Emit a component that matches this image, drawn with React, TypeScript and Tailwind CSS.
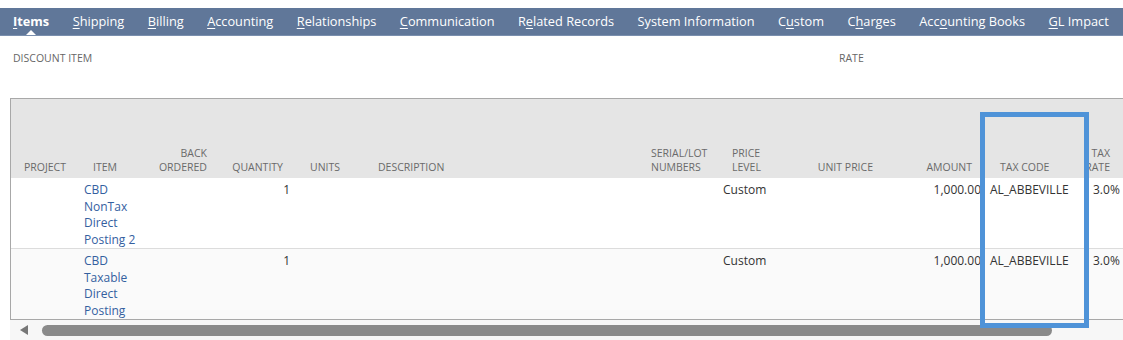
import React from "react";

type Tab = { pre: string; u: string; post: string; active?: boolean };

const tabs: Tab[] = [
  { pre: "", u: "I", post: "tems", active: true },
  { pre: "", u: "S", post: "hipping" },
  { pre: "", u: "B", post: "illing" },
  { pre: "", u: "A", post: "ccounting" },
  { pre: "", u: "R", post: "elationships" },
  { pre: "", u: "C", post: "ommunication" },
  { pre: "R", u: "e", post: "lated Records" },
  { pre: "System Information", u: "", post: "" },
  { pre: "C", u: "u", post: "stom" },
  { pre: "C", u: "h", post: "arges" },
  { pre: "Acc", u: "o", post: "unting Books" },
  { pre: "", u: "G", post: "L Impact" },
];

const colWidths = [68, 71, 62, 80, 78, 275, 75, 70, 95, 100, 100, 60];

type Head = { lines: string[]; cls: string };
const heads: Head[] = [
  { lines: ["PROJECT"], cls: "text-center" },
  { lines: ["ITEM"], cls: "text-left pl-[14px]" },
  { lines: ["BACK", "ORDERED"], cls: "text-right pr-[5px]" },
  { lines: ["QUANTITY"], cls: "text-right pr-[9px]" },
  { lines: ["UNITS"], cls: "text-left pl-[18px]" },
  { lines: ["DESCRIPTION"], cls: "text-left pl-[8px]" },
  { lines: ["SERIAL/LOT", "NUMBERS"], cls: "text-left pl-[6px]" },
  { lines: ["PRICE", "LEVEL"], cls: "text-left pl-[12px]" },
  { lines: ["UNIT PRICE"], cls: "text-right pr-[12px]" },
  { lines: ["AMOUNT"], cls: "text-right pr-[13px]" },
  { lines: ["TAX CODE"], cls: "text-left pl-[15px]" },
  { lines: ["TAX", "RATE"], cls: "text-right pr-[35px]" },
];

const rows = [
  { item: ["CBD", "NonTax", "Direct", "Posting 2"], bg: "bg-white", border: "border-b border-[#dcdcdc]" },
  { item: ["CBD", "Taxable", "Direct", "Posting"], bg: "bg-[#fafafa]", border: "border-b border-[#a8a8a8]" },
];

export default function App() {
  return (
    <div className="relative h-[340px] w-[1123px] overflow-hidden bg-white font-['Open_Sans',sans-serif] text-[#333]">
      {/* Tab bar */}
      <div className="pt-2">
        <div className="flex h-[28px] items-center gap-[23.5px] bg-[#607799] pl-[13px] text-[12.75px] text-white whitespace-nowrap border-b border-[#7a8fae]">
          {tabs.map((t, i) => (
            <div key={i} className={`relative flex h-full items-center pt-[1px] ${t.active ? "font-bold" : ""}`}>
              <span>
                {t.pre}
                {t.u && <span className="underline decoration-1 underline-offset-2">{t.u}</span>}
                {t.post}
              </span>
              {t.active && (
                <span className="absolute bottom-0 left-1/2 h-0 w-0 -translate-x-1/2 border-x-[5px] border-b-[5px] border-x-transparent border-b-white" />
              )}
            </div>
          ))}
        </div>
      </div>

      {/* Labels */}
      <div className="relative h-[62px] pt-[14px] text-[10.5px] leading-4 text-[#666]">
        <span className="absolute left-[13px]">DISCOUNT ITEM</span>
        <span className="absolute left-[839px]">RATE</span>
      </div>

      {/* Table */}
      <div className="ml-[10px] w-[1140px] overflow-hidden border-l border-t border-[#a8a8a8]">
        <table className="table-fixed border-collapse">
          <colgroup>
            {colWidths.map((w, i) => (
              <col key={i} style={{ width: w }} />
            ))}
          </colgroup>
          <thead>
            <tr className="h-[79px] bg-[#e5e5e5]">
              {heads.map((h, i) => (
                <th
                  key={i}
                  className={`align-bottom pb-[4px] text-[10.5px] font-normal leading-[14px] text-[#6a6a6a] whitespace-nowrap ${h.cls}`}
                >
                  {h.lines.map((l, j) => (
                    <div key={j}>{l}</div>
                  ))}
                </th>
              ))}
            </tr>
          </thead>
          <tbody>
            {rows.map((r, ri) => (
              <tr key={ri} className={`${r.bg} ${r.border} h-[70px] text-[12px] leading-[16.5px]`}>
                <td className="align-top pt-[4px]" />
                <td className="align-top pt-[4px] pl-[5px] text-[#34609f]">
                  {r.item.map((l, j) => (
                    <div key={j} className="whitespace-nowrap">{l}</div>
                  ))}
                </td>
                <td className="align-top pt-[4px]" />
                <td className="align-top pt-[4px] pr-[2px] text-right">1</td>
                <td className="align-top pt-[4px]" />
                <td className="align-top pt-[4px]" />
                <td className="align-top pt-[4px]" />
                <td className="align-top pt-[4px] pl-[3px]">Custom</td>
                <td className="align-top pt-[4px]" />
                <td className="align-top pt-[4px] pr-[4px] text-right">1,000.00</td>
                <td className="align-top pt-[4px] pl-[5px]">AL_ABBEVILLE</td>
                <td className="align-top pt-[4px] pl-[8px]">3.0%</td>
              </tr>
            ))}
          </tbody>
        </table>
      </div>

      {/* Scrollbar */}
      <div className="ml-[10px] flex h-[20px] items-center bg-[#f7f7f7]">
        <span className="ml-[10px] h-0 w-0 border-y-[5.5px] border-r-[8px] border-y-transparent border-r-[#777]" />
        <span className="ml-[14px] h-[11px] w-[1010px] rounded-full bg-[#8a8a8a]" />
      </div>

      {/* Highlight box */}
      <div className="absolute left-[980px] top-[112px] h-[216px] w-[109px] border-[5px] border-[#4f93d8]" />
    </div>
  );
}
